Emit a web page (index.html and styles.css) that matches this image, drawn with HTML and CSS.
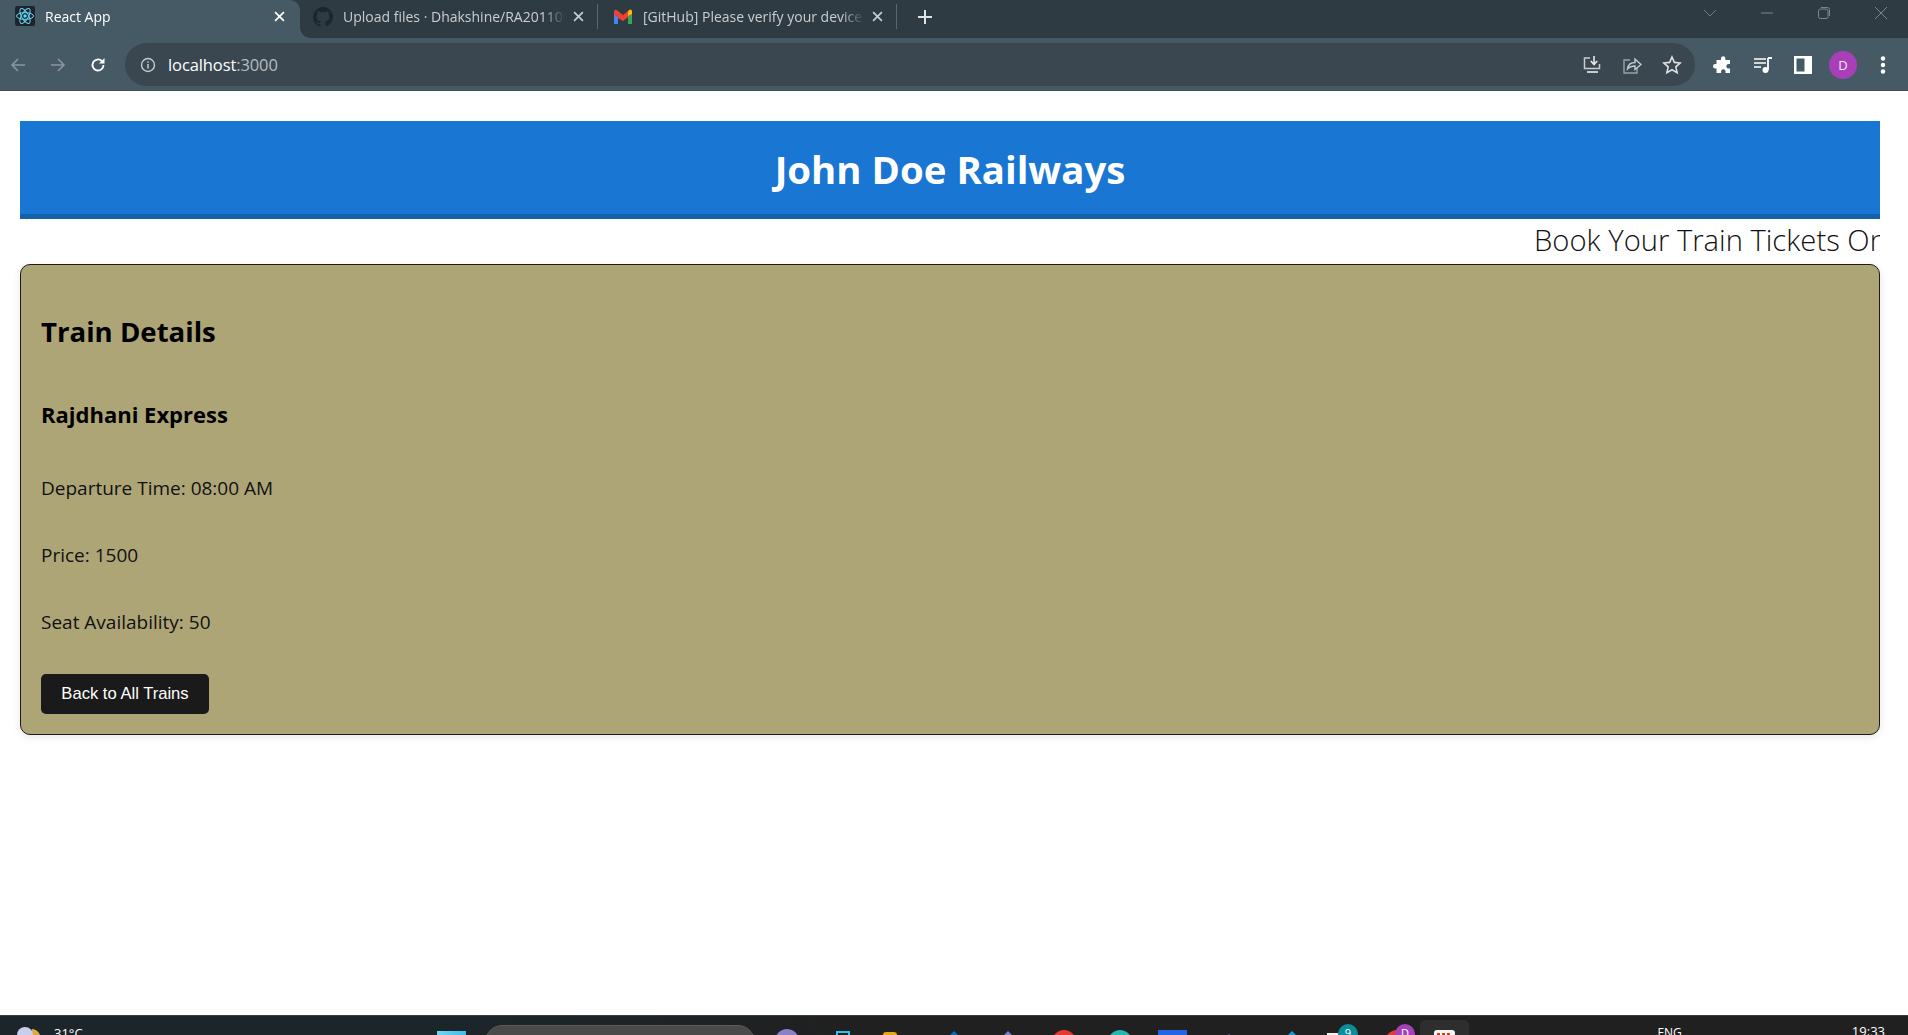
FILE: index.html
```html
<!DOCTYPE html>
<html lang="en">
<head>
<meta charset="utf-8">
<title>React App</title>
<link rel="stylesheet" href="styles.css">
</head>
<body>
<div class="tabbar">
  <div class="tab tab-active">
    <svg class="favicon" viewBox="0 0 20 20"><rect width="20" height="20" rx="2" fill="#20232a"/><g fill="none" stroke="#61dafb" stroke-width="1"><ellipse cx="10" cy="10" rx="8.5" ry="3.4"/><ellipse cx="10" cy="10" rx="8.5" ry="3.4" transform="rotate(60 10 10)"/><ellipse cx="10" cy="10" rx="8.5" ry="3.4" transform="rotate(120 10 10)"/></g><circle cx="10" cy="10" r="1.7" fill="#61dafb"/></svg>
    <span class="tab-title tab-title-active">React App</span>
    <svg class="tab-close" viewBox="0 0 10 10"><path d="M1 1l8 8M9 1l-8 8" stroke="#fff" stroke-width="1.6"/></svg>
  </div>
  <div class="tab tab-second">
    <svg class="favicon" viewBox="0 0 16 16"><path fill="#1d262c" d="M8 0a8 8 0 0 0-2.5 15.6c.4.1.5-.2.5-.4v-1.4c-2.2.5-2.7-1-2.7-1-.4-.9-.9-1.200-.9-1.200-.7-.5.100-.5.100-.5.800.100 1.200.8 1.200.8.700 1.200 1.900.9 2.300.7.100-.5.300-.9.500-1.100-1.800-.2-3.600-.9-3.600-4 0-.9.300-1.600.8-2.100-.1-.2-.4-1 .1-2.100 0 0 .7-.2 2.200.8a7.600 7.600 0 0 1 4 0c1.500-1 2.200-.8 2.200-.8.400 1.100.200 1.900.100 2.100.5.500.8 1.200.8 2.100 0 3.100-1.900 3.800-3.700 4 .3.300.6.800.6 1.500v2.200c0 .2.100.5.500.4A8 8 0 0 0 8 0z"/></svg>
    <span class="tab-title">Upload files · Dhakshine/RA2011003010</span>
    <svg class="tab-close" viewBox="0 0 10 10"><path d="M1 1l8 8M9 1l-8 8" stroke="#c9ced1" stroke-width="1.500"/></svg>
  </div>
  <div class="tab tab-third">
    <svg class="favicon" viewBox="0 0 20 16"><path fill="#4285f4" d="M1 15V3l4 3v9z"/><path fill="#34a853" d="M15 15V6l4-3v12z"/><path fill="#ea4335" d="M5 9L1 5V2.500C1 1 2.800.3 4 1.200L10 6l6-4.800c1.200-.9 3-.2 3 1.300V5l-9 7z"/><path fill="#fbbc04" d="M15 7V2.800l1-1.600c1.200-.9 3-.2 3 1.300V5z"/></svg>
    <span class="tab-title">[GitHub] Please verify your device</span>
    <svg class="tab-close" viewBox="0 0 10 10"><path d="M1 1l8 8M9 1l-8 8" stroke="#c9ced1" stroke-width="1.500"/></svg>
  </div>
  <svg class="new-tab" viewBox="0 0 16 16"><path d="M8 1v14M1 8h14" stroke="#dfe3e5" stroke-width="2"/></svg>
  <div class="window-controls">
    <svg class="win-icon" viewBox="0 0 14 14"><path d="M1 4l6 6 6-6" fill="none" stroke="#6f7b82" stroke-width="1"/></svg>
    <svg class="win-icon" viewBox="0 0 14 14"><path d="M1 7h12" stroke="#7c878d" stroke-width="1"/></svg>
    <svg class="win-icon" viewBox="0 0 14 14"><rect x="1.500" y="3" width="9.500" height="9.500" rx="2" fill="none" stroke="#7c878d"/><path d="M4 1.500h6.500a2 2 0 0 1 2 2V10" fill="none" stroke="#7c878d"/></svg>
    <svg class="win-icon" viewBox="0 0 14 14"><path d="M1 1l12 12M13 1L1 13" stroke="#7c878d" stroke-width="1"/></svg>
  </div>
</div>
<div class="toolbar">
  <svg class="nav-icon" viewBox="0 0 16 16"><path d="M15 8H2M8 2L2 8l6 6" fill="none" stroke="#8a969d" stroke-width="1.600"/></svg>
  <svg class="nav-icon" viewBox="0 0 16 16"><path d="M1 8h13M8 2l6 6-6 6" fill="none" stroke="#8a969d" stroke-width="1.600"/></svg>
  <svg class="nav-icon" viewBox="0 0 16 16"><path d="M13.500 8A5.500 5.500 0 1 1 11.800 4" fill="none" stroke="#fff" stroke-width="1.800"/><path d="M14.500 1v5.500H9z" fill="#fff"/></svg>
  <div class="omnibox">
    <svg class="info-icon" viewBox="0 0 16 16"><circle cx="8" cy="8" r="6.500" fill="none" stroke="#c4c9cc" stroke-width="1.400"/><path d="M8 7v4.500M8 4.300v1.500" stroke="#c4c9cc" stroke-width="1.500"/></svg>
    <span class="url">localhost<span class="url-port">:3000</span></span>
    <div class="omni-actions">
      <svg class="tool-icon" viewBox="0 0 20 20"><path d="M8 3H2.500v10.500h15V9" fill="none" stroke="#c6cbce" stroke-width="1.500"/><path d="M12 1v8M8.800 6l3.200 3.500L15.200 6" fill="none" stroke="#e6e8ea" stroke-width="1.600"/><path d="M5 16h11v2H5z" fill="#c6cbce"/></svg>
      <svg class="tool-icon" viewBox="0 0 20 20"><path d="M8 5H2v13h13v-5" fill="none" stroke="#9aa3a8" stroke-width="1.400"/><path d="M5.500 14c.5-4 3.500-6.500 7.500-6.500V4l6 5.500-6 5V11c-3 0-5.500.8-7.500 3z" fill="none" stroke="#c6cbce" stroke-width="1.400"/></svg>
      <svg class="tool-icon" viewBox="0 0 20 20"><path d="M10 2l2.400 5.400 5.800.6-4.400 3.900 1.300 5.700L10 14.700l-5.100 2.900 1.300-5.700L1.800 8l5.800-.6z" fill="none" stroke="#dfe2e4" stroke-width="1.600"/></svg>
    </div>
  </div>
  <div class="tool-actions">
    <svg class="tool-icon" viewBox="0 0 20 20"><path fill="#fff" d="M8 3.500a2.200 2.200 0 0 1 4.400 0V5H17v4h-1.500a2.200 2.200 0 0 0 0 4.400H17V18h-4.500v-1.500a2.200 2.200 0 0 0-4.400 0V18H3.500v-4.600H2.200a2.200 2.200 0 0 1 0-4.400h1.300V5H8z"/></svg>
    <svg class="tool-icon" viewBox="0 0 20 20"><path d="M1 4h12M1 8h12M1 12h7" stroke="#fff" stroke-width="1.600"/><path d="M15 3v12" stroke="#fff" stroke-width="1.800"/><path d="M15 3h4" stroke="#fff" stroke-width="2"/><circle cx="12.500" cy="15" r="3" fill="#fff"/></svg>
    <svg class="tool-icon" viewBox="0 0 20 20"><path fill="#fff" fill-rule="evenodd" d="M1 1h18v18H1zM3.500 3.500v13h8v-13z"/></svg>
    <span class="avatar">D</span>
    <svg class="tool-icon" viewBox="0 0 20 20"><circle cx="10" cy="3.500" r="2.200" fill="#fff"/><circle cx="10" cy="10" r="2.200" fill="#fff"/><circle cx="10" cy="16.500" r="2.200" fill="#fff"/></svg>
  </div>
</div>
<main class="page">
  <header class="site-header"><h1 class="site-title">John Doe Railways</h1></header>
  <div class="ticker"><span class="ticker-text">Book Your Train Tickets Online</span></div>
  <section class="card">
    <h2 class="card-title">Train Details</h2>
    <h3 class="train-name">Rajdhani Express</h3>
    <p class="train-line">Departure Time: 08:00 AM</p>
    <p class="train-line">Price: 1500</p>
    <p class="train-line">Seat Availability: 50</p>
    <button class="back-button">Back to All Trains</button>
  </section>
</main>
<footer class="taskbar">
  <svg class="tb tb-weather" viewBox="0 0 30 30"><path d="M20 6a9 9 0 0 1 8 12H18z" fill="#e0a93a"/><circle cx="13" cy="12" r="8" fill="#c6d0ee"/></svg>
  <span class="tb-temp">31°C</span>
  <span class="tb tb-win"></span>
  <span class="tb tb-search"></span>
  <span class="tb tb-round tb-violet"></span>
  <span class="tb tb-outline"></span>
  <span class="tb tb-folder"></span>
  <svg class="tb tb-diamond tb-d1" viewBox="0 0 20 20"><path d="M10 0l10 10H0z" fill="#0d6ab5"/></svg>
  <svg class="tb tb-diamond tb-d2" viewBox="0 0 20 20"><path d="M10 0l10 10H0z" fill="#7a80c8"/></svg>
  <span class="tb tb-round tb-red"></span>
  <span class="tb tb-round tb-teal"></span>
  <span class="tb tb-blue"></span>
  <svg class="tb tb-diamond tb-d3" viewBox="0 0 20 20"><path d="M10 3l7 7H3z" fill="#7f78d2"/></svg>
  <svg class="tb tb-diamond tb-d4" viewBox="0 0 20 20"><path d="M10 0l10 10H0z" fill="#1a98d5"/></svg>
  <span class="tb tb-white"></span>
  <span class="tb tb-badge tb-badge-teal">9</span>
  <span class="tb tb-round tb-red2"></span>
  <span class="tb tb-badge tb-badge-purple">D</span>
  <span class="tb tb-active"><span class="tb-calendar"></span></span>
  <span class="tb-lang">ENG</span>
  <span class="tb-time">19:33</span>
</footer>
</body>
</html>
```
FILE: styles.css
```css
* { box-sizing: border-box; }
html, body { height: 100%; }
body {
  margin: 0;
  height: 1035px;
  overflow: hidden;
  display: flex;
  flex-direction: column;
  background: #fff;
  font-family: "Open Sans", "Noto Sans", sans-serif;
  color: #000;
}
.tabbar {
  height: 38px;
  flex: none;
  display: flex;
  align-items: flex-start;
  background: #2f3b42;
  font-size: 14px;
}
.tab {
  display: flex;
  align-items: center;
  flex: none;
  position: relative;
}
.tab-active {
  width: 300px;
  height: 38px;
  padding: 0 15px 6px 15px;
  background: #455a64;
  border-radius: 0 10px 0 0;
}
.tab-active::after {
  content: "";
  position: absolute;
  right: -10px;
  bottom: 0;
  width: 10px;
  height: 10px;
  background: radial-gradient(circle at 100% 0, transparent 9.5px, #455a64 10px);
}
.tab-second {
  width: 298px;
  height: 25px;
  margin-top: 4px;
  padding: 0 13px 0 13px;
  border-right: 1px solid #5a676e;
}
.tab-third {
  width: 299px;
  height: 25px;
  margin-top: 4px;
  padding: 0 13px 0 15px;
  border-right: 1px solid #5a676e;
}
.favicon { width: 20px; height: 20px; flex: none; }
.tab-title {
  flex: 1;
  margin-left: 10px;
  white-space: nowrap;
  overflow: hidden;
  color: #c9ced1;
  min-width: 0;
  -webkit-mask-image: linear-gradient(90deg, #000 90%, transparent);
  mask-image: linear-gradient(90deg, #000 90%, transparent);
}
.tab-title-active { margin-left: 10px; color: #fff; }
.tab-close { width: 11px; height: 11px; flex: none; margin-left: 8px; }
.new-tab { width: 16px; height: 16px; margin: 9px 0 0 20px; flex: none; }
.window-controls {
  margin-left: auto;
  display: flex;
  align-items: center;
  gap: 43px;
  padding: 6px 20px 0 0;
}
.win-icon { width: 14px; height: 14px; display: block; }
.toolbar {
  height: 53px;
  flex: none;
  display: flex;
  align-items: center;
  gap: 24px;
  padding: 1px 12px 0 10px;
  background: #455a64;
  border-bottom: 1px solid #3d4e57;
}
.nav-icon { width: 16px; height: 16px; flex: none; }
.omnibox {
  width: 1570px;
  height: 43px;
  margin-left: -5px;
  padding: 0 13px 0 15px;
  flex: none;
  display: flex;
  align-items: center;
  background: #3a4750;
  border-radius: 22px;
}
.info-icon { width: 16px; height: 16px; flex: none; }
.url { margin-left: 12px; font-size: 16.5px; letter-spacing: -0.1px; color: #fff; }
.url-port { color: #b6bcc0; }
.omni-actions { margin-left: auto; display: flex; gap: 20px; align-items: center; }
.tool-icon { width: 20px; height: 20px; display: block; flex: none; }
.tool-actions {
  margin-left: -6px;
  display: flex;
  align-items: center;
  gap: 20px;
}
.avatar {
  width: 28px;
  height: 28px;
  margin: 0 -4px;
  flex: none;
  display: flex;
  align-items: center;
  justify-content: center;
  border-radius: 50%;
  background: #a93fb8;
  color: #f5e6f7;
  font-size: 13px;
}
.page {
  flex: 1;
  min-height: 0;
  padding: 30px 28px 0 20px;
  overflow: hidden;
}
.site-header {
  height: 98px;
  padding-top: 2px;
  display: flex;
  align-items: center;
  justify-content: center;
  background: #1976d2;
  border-bottom: 5px solid #1560ab;
}
.site-title {
  margin: 0;
  color: #fff;
  font-size: 38.4px;
  font-weight: 700;
}
.ticker {
  height: 45px;
  padding-left: 1514px;
  overflow: hidden;
  white-space: nowrap;
  font-size: 29.2px;
  line-height: 42px;
  font-weight: 300;
  color: #111;
}
.ticker-text { display: inline-block; }
.card {
  height: 471px;
  padding: 0 20px;
  background: #aea577;
  border: 1px solid #1b1b1b;
  border-radius: 10px;
  box-shadow: 0 2px 8px rgba(0, 0, 0, 0.1);
}
.card-title {
  margin: 46px 0 0;
  font-size: 27.6px;
  line-height: 40px;
  font-weight: 700;
}
.train-name {
  margin: 48px 0 0;
  font-size: 22px;
  line-height: 30px;
  font-weight: 700;
}
.train-line {
  margin: 40px 0 0;
  font-size: 19px;
  line-height: 27px;
  color: #111;
}
.train-name + .train-line { margin-top: 46px; }
.back-button {
  display: block;
  width: 168px;
  height: 40px;
  margin-top: 38px;
  padding: 0;
  border: 0;
  border-radius: 5px;
  background: #1a1a1a;
  color: #fff;
  font-family: "Liberation Sans", Arial, sans-serif;
  font-size: 16.6px;
}
.taskbar {
  height: 20px;
  flex: none;
  display: flex;
  align-items: flex-start;
  overflow: hidden;
  border-top: 1px solid #3c3c3c;
  background: linear-gradient(90deg, #1c2529 0, #1c2529 25%, #202020 45%);
}
.tb { display: block; flex: none; }
.tb-weather { width: 30px; height: 30px; margin: 7px 0 0 12px; }
.tb-temp { margin: 8px 0 0 12px; font-size: 13px; line-height: 18px; color: #fff; width: 34px; flex: none; }
.tb-win { width: 29px; height: 20px; margin: 15px 0 0 349px; background: linear-gradient(135deg, #6fdcf8, #27a7e6); }
.tb-search { width: 270px; height: 34px; margin: 9px 0 0 19px; border-radius: 17px; background: #4a4a4a; border: 1px solid #5a5a5a; }
.tb-round { width: 24px; height: 24px; border-radius: 50%; }
.tb-violet { margin: 13px 0 0 20px; background: #8b80c9; }
.tb-outline { width: 14px; height: 20px; margin: 15px 0 0 37px; border: 2px solid #29c2f2; }
.tb-folder { width: 14px; height: 20px; margin: 16px 0 0 33px; border-radius: 3px 3px 0 0; background: #e8a90f; }
.tb-diamond { width: 20px; height: 20px; }
.tb-d1 { margin: 15px 0 0 47px; }
.tb-d2 { margin: 15px 0 0 34px; }
.tb-red { margin: 14px 0 0 34px; background: #e53a2f; }
.tb-teal { margin: 14px 0 0 32px; background: #22b8b0; }
.tb-blue { width: 29px; height: 20px; margin: 14px 0 0 26px; background: #2465e6; }
.tb-d3 { margin: 15px 0 0 32px; }
.tb-d4 { margin: 15px 0 0 43px; }
.tb-white { width: 14px; height: 20px; margin: 17px 0 0 25px; background: #f2f2f2; }
.tb-badge {
  width: 20px;
  height: 24px;
  margin: 8px 0 0 -3px;
  border-radius: 10px;
  text-align: center;
  font-size: 11px;
  line-height: 18px;
  color: #fff;
}
.tb-badge-teal { background: #0b8d9c; }
.tb-red2 { margin: 14px 0 0 27px; background: #e13c2e; }
.tb-badge-purple { margin-left: -14px; background: #a542bb; }
.tb-active {
  width: 49px;
  height: 30px;
  margin: 4px 0 0 5px;
  padding: 10px 0 0 14px;
  background: #2e2e2e;
  border-radius: 5px;
}
.tb-calendar {
  display: block;
  width: 21px;
  height: 20px;
  border-radius: 3px;
  background:
    repeating-linear-gradient(90deg, #d83b1f 0 3px, #f6f6f6 3px 5px) 3px 3px / 15px 7px no-repeat,
    #f6f6f6;
}
.tb-lang { margin: 8px 0 0 auto; font-size: 12px; line-height: 18px; color: #fff; }
.tb-time { margin: 6px 23px 0 170px; font-size: 13px; line-height: 18px; color: #fff; }
```
